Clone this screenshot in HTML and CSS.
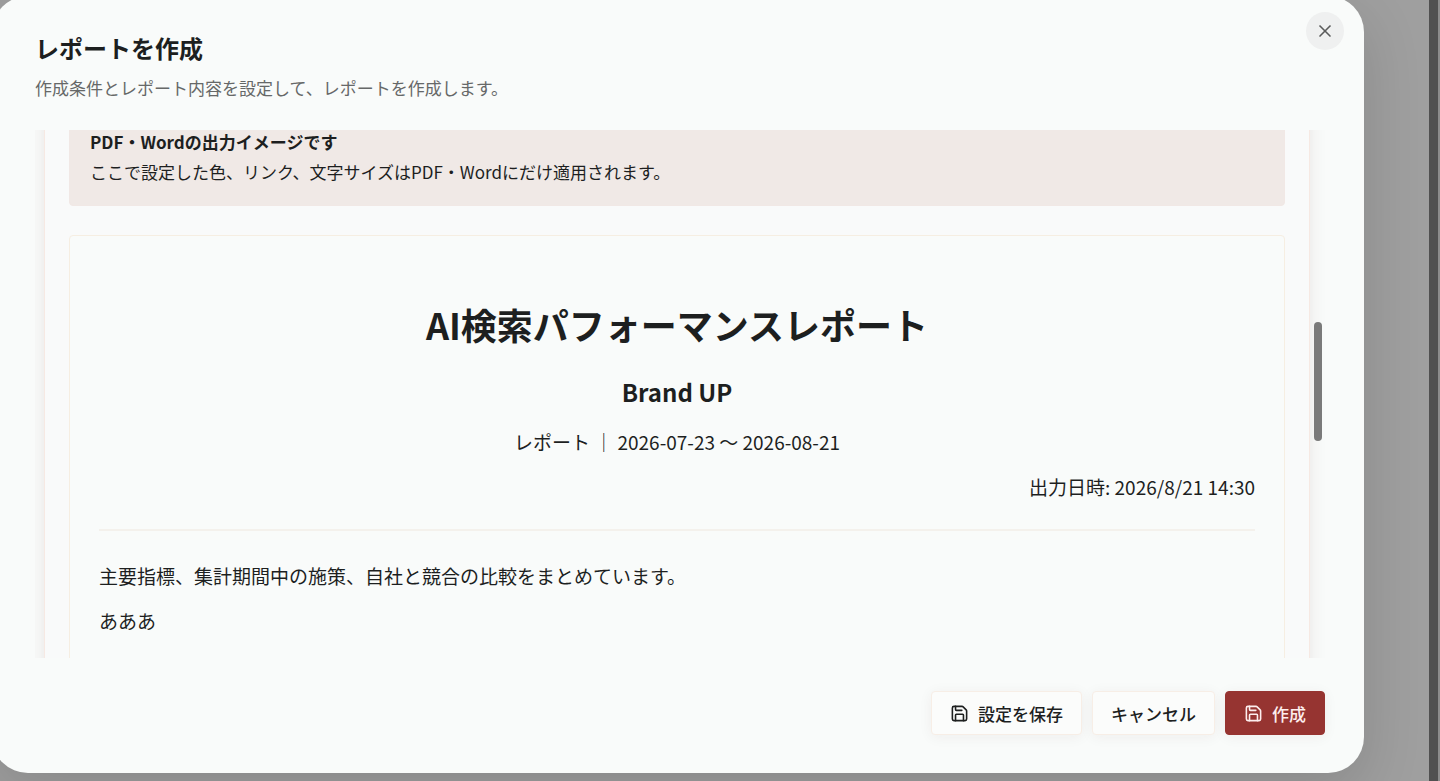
FILE: index.html
```html
<!DOCTYPE html>
<html lang="ja">
<head>
  <meta charset="UTF-8">
  <meta name="viewport" content="width=device-width, initial-scale=1.0">
  <title>レポートを作成</title>
  <link rel="stylesheet" href="styles.css">
</head>
<body>
  <div class="overlay">
    <div class="dialog" role="dialog" aria-labelledby="dialogTitle">
      <header class="dialog-header">
        <h2 id="dialogTitle">レポートを作成</h2>
        <p>作成条件とレポート内容を設定して、レポートを作成します。</p>
      </header>
      <button class="close" type="button" aria-label="閉じる">
        <svg viewBox="0 0 24 24"><path d="M18 6 6 18"/><path d="m6 6 12 12"/></svg>
      </button>

      <div class="scroll-wrap">
        <div class="scroll-area">
          <div class="card">
            <div class="notice">
              <strong>PDF・Wordの出力イメージです</strong>
              <p>ここで設定した色、リンク、文字サイズはPDF・Wordにだけ適用されます。</p>
            </div>
            <article class="report">
              <h1>AI検索パフォーマンスレポート</h1>
              <h3>Brand UP</h3>
              <p class="period">レポート ｜ 2026-07-23 〜 2026-08-21</p>
              <p class="output-date">出力日時: 2026/8/21 14:30</p>
              <hr>
              <p>主要指標、集計期間中の施策、自社と競合の比較をまとめています。</p>
              <p>あああ</p>
            </article>
          </div>
        </div>
        <div class="thumb"></div>
      </div>

      <footer class="dialog-footer">
        <button class="btn" type="button">
          <svg viewBox="0 0 24 24"><path d="M15.2 3a2 2 0 0 1 1.4.6l3.8 3.8a2 2 0 0 1 .6 1.4V19a2 2 0 0 1-2 2H5a2 2 0 0 1-2-2V5a2 2 0 0 1 2-2z"/><path d="M17 21v-7a1 1 0 0 0-1-1H8a1 1 0 0 0-1 1v7"/><path d="M7 3v4a1 1 0 0 0 1 1h7"/></svg>
          設定を保存
        </button>
        <button class="btn" type="button">キャンセル</button>
        <button class="btn btn-primary" type="button">
          <svg viewBox="0 0 24 24"><path d="M15.2 3a2 2 0 0 1 1.4.6l3.8 3.8a2 2 0 0 1 .6 1.4V19a2 2 0 0 1-2 2H5a2 2 0 0 1-2-2V5a2 2 0 0 1 2-2z"/><path d="M17 21v-7a1 1 0 0 0-1-1H8a1 1 0 0 0-1 1v7"/><path d="M7 3v4a1 1 0 0 0 1 1h7"/></svg>
          作成
        </button>
      </footer>
    </div>
    <div class="page-scrollbar"></div>
  </div>
</body>
</html>
```
FILE: styles.css
```css
* {
  box-sizing: border-box;
}
body {
  margin: 0;
  font-family: "Noto Sans CJK JP", sans-serif;
  color: #1d1f1f;
}
h1, h2, h3, p {
  margin: 0;
}
svg {
  fill: none;
  stroke: currentColor;
  stroke-width: 2;
  stroke-linecap: round;
  stroke-linejoin: round;
}
.overlay {
  display: flex;
  height: 100vh;
  overflow: hidden;
  background-color: #9f9f9f;
}
.dialog {
  position: relative;
  flex: 1;
  min-width: 0;
  display: flex;
  flex-direction: column;
  margin: -4px 65px 8px -8px;
  padding: 34px 39px 38px 43px;
  background-color: #f9fbfa;
  border-radius: 36px;
  box-shadow: 0 20px 60px rgba(0, 0, 0, 0.14);
}
.page-scrollbar {
  width: 11px;
  background-color: #505050;
  border-right: 2px solid #8c8c8c;
}
.dialog-header h2 {
  font-size: 24px;
  line-height: 36px;
  font-weight: 700;
}
.dialog-header p {
  margin-top: 10px;
  font-size: 17px;
  line-height: 24px;
  color: #666868;
}
.close {
  position: absolute;
  top: 16px;
  right: 20px;
  display: flex;
  align-items: center;
  justify-content: center;
  width: 38px;
  height: 38px;
  padding: 0;
  border: none;
  border-radius: 50%;
  background-color: #eff0f0;
  color: #5a5b5b;
  cursor: pointer;
}
.close svg {
  width: 20px;
  height: 20px;
}
.scroll-wrap {
  position: relative;
  flex: 1;
  min-height: 0;
  margin: 30px 0 33px;
}
.scroll-area {
  height: 100%;
  padding: 0 15px 0 9px;
  overflow: hidden;
}
.thumb {
  position: absolute;
  top: 192px;
  right: 3px;
  width: 8px;
  height: 119px;
  border-radius: 4px;
  background-color: #7a7a7a;
}
/* the card and notice are scrolled past their top edge */
.card {
  margin-top: -63px;
  padding: 40px 24px;
  border: 1px solid #f6e9e3;
  background-color: #f9fafa;
  box-shadow: 0 0 16px rgba(90, 40, 40, 0.1);
}
.notice {
  padding: 19px 20px;
  border: 1px solid #f1e8e5;
  border-radius: 4px;
  background-color: #f0e9e6;
  font-size: 17px;
  line-height: 28px;
}
.notice strong {
  display: block;
  margin-bottom: 2px;
}
.report {
  margin-top: 29px;
  padding: 58px 29px 200px;
  border: 1px solid #f6eee2;
  border-radius: 4px;
  background-color: #f9fbfa;
  font-size: 19px;
  line-height: 32px;
}
.report h1 {
  font-size: 36px;
  line-height: 60px;
  text-align: center;
}
.report h3 {
  margin-top: 17px;
  font-size: 24px;
  line-height: 42px;
  text-align: center;
}
.report p {
  margin-top: 13px;
}
.report .period {
  text-align: center;
}
.report .output-date {
  text-align: right;
}
.report hr {
  margin: 26px 0 29px;
  border: none;
  border-top: 2px solid #f4f1ec;
}
.dialog-footer {
  display: flex;
  justify-content: flex-end;
  gap: 10px;
}
.btn {
  display: flex;
  align-items: center;
  gap: 9px;
  height: 44px;
  padding: 0 18px;
  border: 1px solid #f7eee6;
  border-radius: 4px;
  background-color: #fbfcfb;
  box-shadow: 0 2px 14px rgba(60, 40, 40, 0.06);
  color: #1d1f1f;
  font-family: inherit;
  font-size: 17px;
  font-weight: 500;
  cursor: pointer;
}
.btn svg {
  width: 19px;
  height: 19px;
}
.btn-primary {
  border-color: #963431;
  background-color: #963431;
  color: #fdeeee;
}
```
